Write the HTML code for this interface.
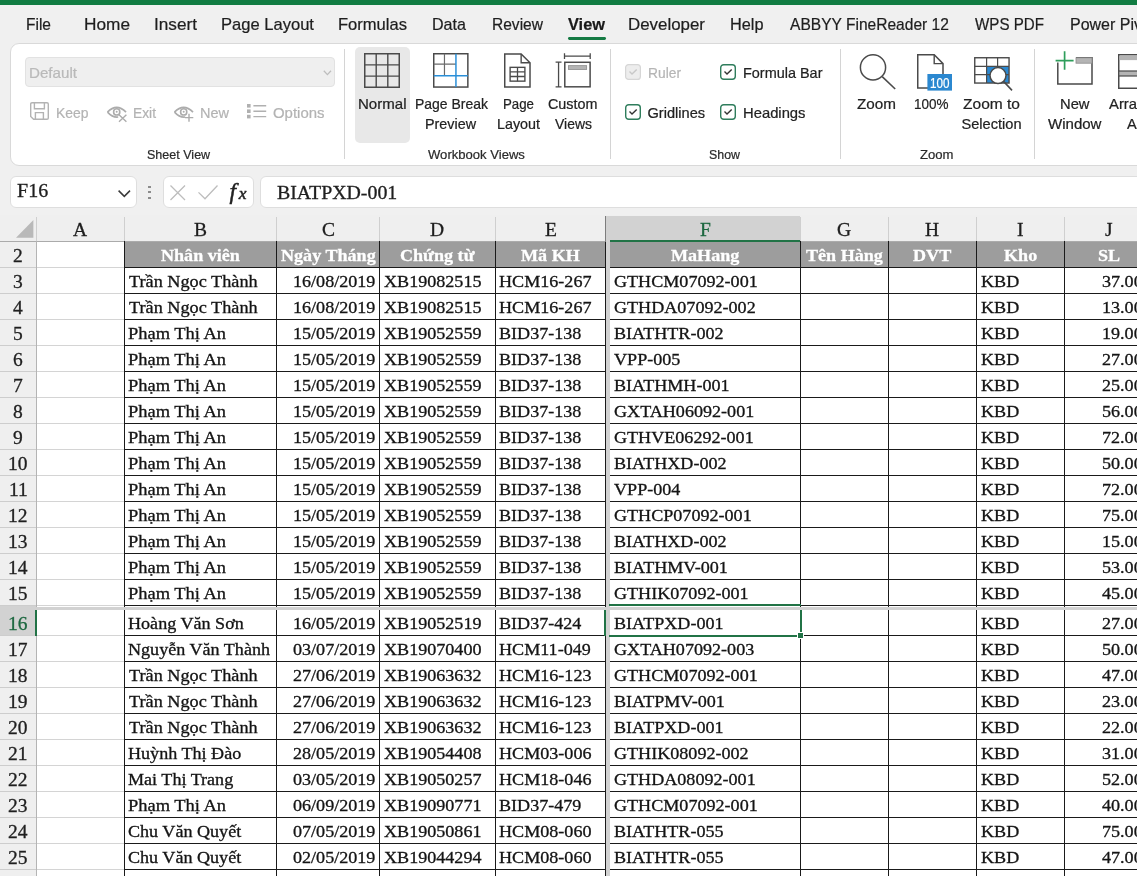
<!DOCTYPE html>
<html><head><meta charset="utf-8"><title>Excel</title>
<style>
html,body{margin:0;padding:0;}
body{width:1137px;height:876px;overflow:hidden;background:#f0f0f0;position:relative;font-family:"Liberation Sans",sans-serif;}
.t{position:absolute;white-space:nowrap;transform-origin:0 0;line-height:normal;-webkit-text-stroke:0.22px currentColor;}
.s{font-family:"Liberation Serif",serif;-webkit-text-stroke:0.3px currentColor;}
.r{position:absolute;}
svg{position:absolute;overflow:visible;}
#w{position:absolute;left:0;top:0;width:1137px;height:876px;will-change:transform;}
</style></head><body><div id="w">
<div class="r" style="left:0px;top:0px;width:1137px;height:4.5px;background:#117c42;"></div>
<span class="t" style="left:26.00px;top:15.00px;font-size:16.2px;color:#1e1e1e;transform:scaleX(0.9577);">File</span>
<span class="t" style="left:84.00px;top:15.00px;font-size:16.2px;color:#1e1e1e;transform:scaleX(1.0645);">Home</span>
<span class="t" style="left:154.00px;top:15.00px;font-size:16.2px;color:#1e1e1e;transform:scaleX(1.0613);">Insert</span>
<span class="t" style="left:221.00px;top:15.00px;font-size:16.2px;color:#1e1e1e;transform:scaleX(1.0223);">Page Layout</span>
<span class="t" style="left:338.00px;top:15.00px;font-size:16.2px;color:#1e1e1e;transform:scaleX(1.0220);">Formulas</span>
<span class="t" style="left:432.00px;top:15.00px;font-size:16.2px;color:#1e1e1e;transform:scaleX(0.9936);">Data</span>
<span class="t" style="left:492.00px;top:15.00px;font-size:16.2px;color:#1e1e1e;transform:scaleX(0.9601);">Review</span>
<span class="t" style="left:628.00px;top:15.00px;font-size:16.2px;color:#1e1e1e;transform:scaleX(1.0428);">Developer</span>
<span class="t" style="left:730.00px;top:15.00px;font-size:16.2px;color:#1e1e1e;transform:scaleX(1.0055);">Help</span>
<span class="t" style="left:789.50px;top:15.00px;font-size:16.2px;color:#1e1e1e;transform:scaleX(0.9613);">ABBYY FineReader 12</span>
<span class="t" style="left:974.50px;top:15.00px;font-size:16.2px;color:#1e1e1e;transform:scaleX(0.9349);">WPS PDF</span>
<span class="t" style="left:1069.50px;top:15.00px;font-size:16.2px;color:#1e1e1e;transform:scaleX(0.9873);">Power Pivot</span>
<span class="t" style="left:568.00px;top:15.00px;font-size:16.2px;color:#1a1a1a;font-weight:bold;transform:scaleX(1.0103);">View</span>
<div class="r" style="left:568px;top:37px;width:37.5px;height:2.8px;background:#157a43;border-radius:1.4px;"></div>
<div class="r" style="left:10px;top:43px;width:1200px;height:123px;background:#ffffff;border:1px solid #d9d9d9;border-radius:9px;box-sizing:border-box;"></div>
<div class="r" style="left:344px;top:49px;width:1px;height:110px;background:#d4d4d4;"></div>
<div class="r" style="left:610px;top:49px;width:1px;height:110px;background:#d4d4d4;"></div>
<div class="r" style="left:840px;top:49px;width:1px;height:110px;background:#d4d4d4;"></div>
<div class="r" style="left:1034px;top:49px;width:1px;height:110px;background:#d4d4d4;"></div>
<div class="r" style="left:25px;top:57px;width:310px;height:30px;background:#efefef;border:1px solid #e2e2e2;border-radius:4px;box-sizing:border-box;"></div>
<span class="t" style="left:29.00px;top:64.80px;font-size:14.6px;color:#b9b9b9;transform:scaleX(1.0376);">Default</span>
<svg style="left:323px;top:70px" width="9" height="6" viewBox="0 0 9 6"><path d="M0.8 0.8 L4.4 4.6 L8 0.8" fill="none" stroke="#bdbdbd" stroke-width="1.3"/></svg>
<span class="t" style="left:55.50px;top:104.60px;font-size:14.6px;color:#b3b3b3;transform:scaleX(0.9531);">Keep</span>
<span class="t" style="left:132.50px;top:104.60px;font-size:14.6px;color:#b3b3b3;transform:scaleX(0.9450);">Exit</span>
<span class="t" style="left:200.00px;top:104.60px;font-size:14.6px;color:#b3b3b3;transform:scaleX(0.9929);">New</span>
<span class="t" style="left:272.50px;top:104.60px;font-size:14.6px;color:#b3b3b3;transform:scaleX(1.0235);">Options</span>
<svg style="left:30px;top:102px" width="19" height="18" viewBox="0 0 19 18"><path d="M2 .7 H17 Q18.3 .7 18.3 2 V16 Q18.3 17.3 17 17.3 H3.6 L.7 14.4 V2 Q.7 .7 2 .7 Z" fill="none" stroke="#b3b3b3" stroke-width="1.4"/><path d="M4.4 .8 V6.8 H14.4 V.8" fill="none" stroke="#b3b3b3" stroke-width="1.4"/><path d="M5.4 17.2 V10.6 H13.4 V17.2" fill="none" stroke="#b3b3b3" stroke-width="1.4"/></svg>
<svg style="left:107px;top:104px" width="20" height="18" viewBox="0 0 20 18"><path d="M.5 8.1 Q9.6 -1.5 19 8.1" fill="none" stroke="#acacac" stroke-width="1.7"/><path d="M.5 8.1 Q5.6 13.7 11.2 13" fill="none" stroke="#acacac" stroke-width="1.6"/><circle cx="9.7" cy="7.9" r="3.1" fill="none" stroke="#acacac" stroke-width="1.6"/><circle cx="9.7" cy="7.7" r="1" fill="#acacac"/><path d="M12 10.8 L19.4 17.7 M19.4 10.8 L12 17.7" fill="none" stroke="#acacac" stroke-width="1.4"/></svg>
<svg style="left:174.3px;top:104px" width="20" height="18" viewBox="0 0 20 18"><path d="M.5 8.1 Q9.6 -1.5 19 8.1" fill="none" stroke="#acacac" stroke-width="1.7"/><path d="M.5 8.1 Q5.6 13.7 11.2 13" fill="none" stroke="#acacac" stroke-width="1.6"/><circle cx="9.7" cy="7.9" r="3.1" fill="none" stroke="#acacac" stroke-width="1.6"/><circle cx="9.7" cy="7.7" r="1" fill="#acacac"/><path d="M15 9.8 V17.7 M10.9 13.6 H19.3" fill="none" stroke="#acacac" stroke-width="1.4"/></svg>
<svg style="left:247px;top:104px" width="20" height="15" viewBox="0 0 20 15"><g fill="#b0b0b0"><rect x="0" y="0" width="3.6" height="3.6"/><rect x="0" y="5.4" width="3.6" height="3.6"/><rect x="0" y="10.8" width="3.6" height="3.6"/></g><path d="M6.4 1.8 H19.2 M6.4 7.2 H19.2 M6.4 12.6 H19.2" stroke="#b0b0b0" stroke-width="1.4"/></svg>
<span class="t" style="left:146.80px;top:147.00px;font-size:13.2px;color:#2a2a2a;transform:scaleX(0.9499);">Sheet View</span>
<div class="r" style="left:355px;top:47px;width:55px;height:96px;background:#e8e8e8;border-radius:5px;"></div>
<svg style="left:363.6px;top:53.3px" width="36" height="35" viewBox="0 0 36 35"><rect x=".75" y=".75" width="34.5" height="33.5" fill="none" stroke="#4a4a4a" stroke-width="1.5"/><path d="M12.2 .75 V34.25 M23.8 .75 V34.25 M.75 11.9 H35.25 M.75 23.1 H35.25" stroke="#4a4a4a" stroke-width="1.4" fill="none"/></svg>
<svg style="left:433px;top:53.3px" width="35.6" height="34.8" viewBox="0 0 36 35" preserveAspectRatio="none"><rect x=".75" y=".75" width="34.5" height="33.5" fill="#fff" stroke="#4a4a4a" stroke-width="1.5"/><path d="M11.6 .75 V22.8 M.75 11.2 H23.2" stroke="#6a6a6a" stroke-width="1.2" fill="none"/><path d="M23.2 .75 V34.25 M.75 22.8 H35.25" stroke="#2a8fd8" stroke-width="1.5" fill="none"/></svg>
<svg style="left:503.8px;top:53.3px" width="27.6" height="34.8" viewBox="0 0 28 35"><path d="M.75 .75 H17.4 L26.4 9.8 V34.25 H.75 Z" fill="#fff" stroke="#4a4a4a" stroke-width="1.5"/><path d="M17.4 .75 V9.8 H26.4" fill="none" stroke="#4a4a4a" stroke-width="1.4"/><rect x="6.2" y="14.4" width="15" height="14" fill="none" stroke="#4a4a4a" stroke-width="1.4"/><path d="M6.2 19.1 H21.2 M6.2 23.7 H21.2 M13.7 14.4 V28.4" stroke="#4a4a4a" stroke-width="1.3" fill="none"/></svg>
<svg style="left:555px;top:52.1px" width="36.6" height="36" viewBox="0 0 37 36"><path d="M9.6 1 V7 M35.6 1 V7 M9.6 4 H35.6" stroke="#4a4a4a" stroke-width="1.3" fill="none"/><path d="M.6 10 H6.6 M.6 35 H6.6 M3.6 10 V35" stroke="#4a4a4a" stroke-width="1.3" fill="none"/><rect x="9.9" y="10.2" width="25.6" height="24.8" fill="#fff" stroke="#4a4a4a" stroke-width="1.5"/><rect x="13.6" y="13.6" width="18.4" height="3.8" fill="#b4b4b4" stroke="#8a8a8a" stroke-width=".8"/></svg>
<span class="t" style="left:357.50px;top:95.50px;font-size:14.6px;color:#222222;transform:scaleX(1.0308);">Normal</span>
<span class="t" style="left:414.50px;top:95.50px;font-size:14.6px;color:#222222;transform:scaleX(0.9568);">Page Break</span>
<span class="t" style="left:425.30px;top:115.60px;font-size:14.6px;color:#222222;transform:scaleX(0.9821);">Preview</span>
<span class="t" style="left:502.50px;top:95.50px;font-size:14.6px;color:#222222;transform:scaleX(0.9091);">Page</span>
<span class="t" style="left:497.00px;top:115.60px;font-size:14.6px;color:#222222;transform:scaleX(0.9809);">Layout</span>
<span class="t" style="left:548.00px;top:95.50px;font-size:14.6px;color:#222222;transform:scaleX(0.9841);">Custom</span>
<span class="t" style="left:555.00px;top:115.60px;font-size:14.6px;color:#222222;transform:scaleX(0.9565);">Views</span>
<span class="t" style="left:428.00px;top:147.00px;font-size:13.2px;color:#2a2a2a;transform:scaleX(0.9916);">Workbook Views</span>
<svg style="left:625px;top:64px" width="16" height="16" viewBox="0 0 16 16"><rect x=".6" y=".6" width="14.8" height="14.8" rx="3" fill="#ededed" stroke="#d6d6d6" stroke-width="1.2"/><path d="M4.5 7.6 L7 10 L11.7 5.4" fill="none" stroke="#c8c8c8" stroke-width="1.4"/></svg>
<svg style="left:720px;top:64px" width="16" height="16" viewBox="0 0 16 16"><rect x=".7" y=".7" width="14.6" height="14.6" rx="3" fill="#fff" stroke="#2f7d5c" stroke-width="1.4"/><path d="M4.5 7.6 L7 10 L11.7 5.4" fill="none" stroke="#333" stroke-width="1.4"/></svg>
<svg style="left:625px;top:104px" width="16" height="16" viewBox="0 0 16 16"><rect x=".7" y=".7" width="14.6" height="14.6" rx="3" fill="#fff" stroke="#2f7d5c" stroke-width="1.4"/><path d="M4.5 7.6 L7 10 L11.7 5.4" fill="none" stroke="#333" stroke-width="1.4"/></svg>
<svg style="left:720px;top:104px" width="16" height="16" viewBox="0 0 16 16"><rect x=".7" y=".7" width="14.6" height="14.6" rx="3" fill="#fff" stroke="#2f7d5c" stroke-width="1.4"/><path d="M4.5 7.6 L7 10 L11.7 5.4" fill="none" stroke="#333" stroke-width="1.4"/></svg>
<span class="t" style="left:647.50px;top:64.80px;font-size:14.6px;color:#b5b5b5;transform:scaleX(0.9459);">Ruler</span>
<span class="t" style="left:742.50px;top:64.80px;font-size:14.6px;color:#222222;transform:scaleX(0.9898);">Formula Bar</span>
<span class="t" style="left:647.50px;top:104.60px;font-size:14.6px;color:#222222;">Gridlines</span>
<span class="t" style="left:742.50px;top:104.60px;font-size:14.6px;color:#222222;transform:scaleX(1.0132);">Headings</span>
<span class="t" style="left:709.00px;top:147.00px;font-size:13.2px;color:#2a2a2a;transform:scaleX(0.9388);">Show</span>
<svg style="left:858px;top:52px" width="40" height="40" viewBox="0 0 40 40"><circle cx="15" cy="15.4" r="12.6" fill="#fff" stroke="#4a4a4a" stroke-width="1.5"/><path d="M24.2 24.6 L37.2 37" stroke="#4a4a4a" stroke-width="1.6" fill="none"/></svg>
<svg style="left:916.5px;top:54px" width="36" height="37" viewBox="0 0 36 37"><path d="M.75 .75 H17.2 L26 9.6 V34 H.75 Z" fill="#fff" stroke="#4a4a4a" stroke-width="1.5"/><path d="M17.2 .75 V9.6 H26" fill="none" stroke="#4a4a4a" stroke-width="1.4"/><rect x="10.4" y="20" width="24.6" height="16.6" fill="#2b88d0"/></svg>
<span class="t" style="left:930.00px;top:75.40px;font-size:14px;color:#ffffff;transform:scaleX(0.8348);">100</span>
<svg style="left:974px;top:57px" width="40" height="35" viewBox="0 0 40 35"><rect x="12.6" y="9.4" width="22.4" height="16.6" fill="#2b88d0"/><rect x=".75" y=".75" width="34.3" height="25.3" fill="none" stroke="#4a4a4a" stroke-width="1.4"/><path d="M12.6 .75 V26 M23.6 .75 V26 M.75 9.4 H35 M.75 17.6 H35" stroke="#4a4a4a" stroke-width="1.2" fill="none"/><circle cx="24" cy="18.6" r="8" fill="#fff" stroke="#4a4a4a" stroke-width="1.5"/><path d="M29.8 24.6 L38 33.4" stroke="#4a4a4a" stroke-width="1.6" fill="none"/></svg>
<span class="t" style="left:857.00px;top:95.50px;font-size:14.6px;color:#222222;transform:scaleX(1.0450);">Zoom</span>
<span class="t" style="left:914.00px;top:95.50px;font-size:14.6px;color:#222222;transform:scaleX(0.9239);">100%</span>
<span class="t" style="left:963.00px;top:95.50px;font-size:14.6px;color:#222222;transform:scaleX(1.0644);">Zoom to</span>
<span class="t" style="left:961.50px;top:115.60px;font-size:14.6px;color:#222222;">Selection</span>
<span class="t" style="left:920.00px;top:147.00px;font-size:13.2px;color:#2a2a2a;transform:scaleX(0.9928);">Zoom</span>
<svg style="left:1054px;top:50px" width="40" height="36" viewBox="0 0 40 36"><path d="M3.8 12.4 V34 H38 V7.8 H22" fill="none" stroke="#4a4a4a" stroke-width="1.5"/><rect x="22" y="7.8" width="16" height="5.4" fill="#b4b4b4" stroke="#8a8a8a" stroke-width=".8"/><path d="M10.6 1.2 V19.8 M1.6 10.6 H19.6" stroke="#2e9e5b" stroke-width="1.7" fill="none"/></svg>
<span class="t" style="left:1060.00px;top:95.50px;font-size:14.6px;color:#222222;transform:scaleX(1.0100);">New</span>
<span class="t" style="left:1048.00px;top:115.60px;font-size:14.6px;color:#222222;transform:scaleX(1.0303);">Window</span>
<svg style="left:1118px;top:54px" width="30" height="35" viewBox="0 0 30 35"><rect x=".75" y=".75" width="34" height="33.5" fill="#fff" stroke="#4a4a4a" stroke-width="1.5"/><rect x="1.5" y="1.5" width="33" height="4.6" fill="#b4b4b4"/><rect x=".75" y="17" width="34" height="5" fill="#b4b4b4" stroke="#4a4a4a" stroke-width="1.2"/></svg>
<span class="t" style="left:1108.50px;top:95.50px;font-size:14.6px;color:#222222;transform:scaleX(1.0151);">Arra</span>
<span class="t" style="left:1127.00px;top:115.60px;font-size:14.6px;color:#222222;">A</span>
<div class="r" style="left:10px;top:176px;width:127px;height:31.5px;background:#ffffff;border:1px solid #dedede;border-radius:6px;box-sizing:border-box;"></div>
<span class="t s" style="left:16.60px;top:181.00px;font-size:17.8px;color:#1f1f1f;transform:scaleX(1.1264);">F16</span>
<svg style="left:118px;top:189.5px" width="13" height="8" viewBox="0 0 13 8"><path d="M.6 .6 L6.3 6.4 L12 .6" fill="none" stroke="#3a3a3a" stroke-width="1.5"/></svg>
<div class="r" style="left:148.4px;top:185.8px;width:2.2px;height:2.2px;background:#8c8c8c;"></div>
<div class="r" style="left:148.4px;top:191.2px;width:2.2px;height:2.2px;background:#8c8c8c;"></div>
<div class="r" style="left:148.4px;top:196.6px;width:2.2px;height:2.2px;background:#8c8c8c;"></div>
<div class="r" style="left:162.5px;top:176px;width:91px;height:31.5px;background:#ffffff;border:1px solid #dedede;border-radius:6px;box-sizing:border-box;"></div>
<svg style="left:170px;top:185px" width="16" height="16" viewBox="0 0 16 16"><path d="M.5 .5 L15 15 M15 .5 L.5 15" stroke="#bdbdbd" stroke-width="1.3" fill="none"/></svg>
<svg style="left:198px;top:184.5px" width="20" height="15" viewBox="0 0 20 15"><path d="M.5 7.4 L7 13.8 L19.5 .5" stroke="#bdbdbd" stroke-width="1.3" fill="none"/></svg>
<span class="t s" style="left:229.50px;top:178.00px;font-size:23.5px;color:#222;font-style:italic;-webkit-text-stroke:0.5px #222;">f</span>
<span class="t s" style="left:238.80px;top:183.20px;font-size:17.5px;color:#222;font-style:italic;-webkit-text-stroke:0.5px #222;">x</span>
<div class="r" style="left:259.5px;top:176px;width:900px;height:31.5px;background:#ffffff;border:1px solid #dedede;border-radius:6px;box-sizing:border-box;"></div>
<span class="t s" style="left:276.80px;top:183.00px;font-size:17.8px;color:#1f1f1f;transform:scaleX(1.1170);">BIATPXD-001</span>
<div class="r" style="left:36px;top:241px;width:1101px;height:635px;background:#ffffff;"></div>
<div class="r" style="left:0px;top:215px;width:1137px;height:26px;background:#efefef;"></div>
<div class="r" style="left:609px;top:216px;width:191px;height:25px;background:#d2d2d2;"></div>
<div class="r" style="left:36px;top:217px;width:1px;height:24px;background:#cfcfcf;"></div>
<div class="r" style="left:124px;top:217px;width:1px;height:24px;background:#cfcfcf;"></div>
<div class="r" style="left:276px;top:217px;width:1px;height:24px;background:#cfcfcf;"></div>
<div class="r" style="left:379px;top:217px;width:1px;height:24px;background:#cfcfcf;"></div>
<div class="r" style="left:495px;top:217px;width:1px;height:24px;background:#cfcfcf;"></div>
<div class="r" style="left:609px;top:217px;width:1px;height:24px;background:#cfcfcf;"></div>
<div class="r" style="left:800px;top:217px;width:1px;height:24px;background:#cfcfcf;"></div>
<div class="r" style="left:888px;top:217px;width:1px;height:24px;background:#cfcfcf;"></div>
<div class="r" style="left:976px;top:217px;width:1px;height:24px;background:#cfcfcf;"></div>
<div class="r" style="left:1064px;top:217px;width:1px;height:24px;background:#cfcfcf;"></div>
<div class="r" style="left:1153px;top:217px;width:1px;height:24px;background:#cfcfcf;"></div>
<div class="r" style="left:0px;top:241px;width:1137px;height:1px;background:#ababab;"></div>
<div class="r" style="left:609px;top:239.5px;width:191px;height:2px;background:#217346;"></div>
<svg style="left:16px;top:220px" width="18" height="18" viewBox="0 0 18 18"><path d="M17.4 0 V17.8 H0 Z" fill="#b9b9b9"/></svg>
<span class="t s" style="left:73.46px;top:219.70px;font-size:18.4px;color:#1f1f1f;transform:scaleX(1.0600);">A</span>
<span class="t s" style="left:194.00px;top:219.70px;font-size:18.4px;color:#1f1f1f;transform:scaleX(1.0600);">B</span>
<span class="t s" style="left:321.50px;top:219.70px;font-size:18.4px;color:#1f1f1f;transform:scaleX(1.0600);">C</span>
<span class="t s" style="left:430.46px;top:219.70px;font-size:18.4px;color:#1f1f1f;transform:scaleX(1.0600);">D</span>
<span class="t s" style="left:544.54px;top:219.70px;font-size:18.4px;color:#1f1f1f;transform:scaleX(1.0600);">E</span>
<span class="t s" style="left:699.58px;top:219.70px;font-size:18.4px;color:#1d6840;transform:scaleX(1.0600);">F</span>
<span class="t s" style="left:837.46px;top:219.70px;font-size:18.4px;color:#1f1f1f;transform:scaleX(1.0600);">G</span>
<span class="t s" style="left:925.46px;top:219.70px;font-size:18.4px;color:#1f1f1f;transform:scaleX(1.0600);">H</span>
<span class="t s" style="left:1017.25px;top:219.70px;font-size:18.4px;color:#1f1f1f;transform:scaleX(1.0600);">I</span>
<span class="t s" style="left:1105.20px;top:219.70px;font-size:18.4px;color:#1f1f1f;transform:scaleX(1.0600);">J</span>
<div class="r" style="left:0px;top:242px;width:36px;height:634px;background:#efefef;"></div>
<div class="r" style="left:0px;top:606px;width:36px;height:29.5px;background:#d2d2d2;"></div>
<div class="r" style="left:36px;top:241px;width:1px;height:635px;background:#b4b4b4;"></div>
<div class="r" style="left:0px;top:267px;width:36px;height:1px;background:#cdcdcd;"></div>
<div class="r" style="left:37px;top:267px;width:87px;height:1px;background:#d4d4d4;"></div>
<span class="t s" style="left:13.32px;top:245.60px;font-size:18.4px;color:#1f1f1f;transform:scaleX(1.0600);">2</span>
<div class="r" style="left:0px;top:293px;width:36px;height:1px;background:#cdcdcd;"></div>
<div class="r" style="left:37px;top:293px;width:87px;height:1px;background:#d4d4d4;"></div>
<span class="t s" style="left:13.32px;top:271.60px;font-size:18.4px;color:#1f1f1f;transform:scaleX(1.0600);">3</span>
<div class="r" style="left:0px;top:319px;width:36px;height:1px;background:#cdcdcd;"></div>
<div class="r" style="left:37px;top:319px;width:87px;height:1px;background:#d4d4d4;"></div>
<span class="t s" style="left:13.32px;top:297.60px;font-size:18.4px;color:#1f1f1f;transform:scaleX(1.0600);">4</span>
<div class="r" style="left:0px;top:345px;width:36px;height:1px;background:#cdcdcd;"></div>
<div class="r" style="left:37px;top:345px;width:87px;height:1px;background:#d4d4d4;"></div>
<span class="t s" style="left:13.32px;top:323.60px;font-size:18.4px;color:#1f1f1f;transform:scaleX(1.0600);">5</span>
<div class="r" style="left:0px;top:371px;width:36px;height:1px;background:#cdcdcd;"></div>
<div class="r" style="left:37px;top:371px;width:87px;height:1px;background:#d4d4d4;"></div>
<span class="t s" style="left:13.32px;top:349.60px;font-size:18.4px;color:#1f1f1f;transform:scaleX(1.0600);">6</span>
<div class="r" style="left:0px;top:397px;width:36px;height:1px;background:#cdcdcd;"></div>
<div class="r" style="left:37px;top:397px;width:87px;height:1px;background:#d4d4d4;"></div>
<span class="t s" style="left:13.32px;top:375.60px;font-size:18.4px;color:#1f1f1f;transform:scaleX(1.0600);">7</span>
<div class="r" style="left:0px;top:423px;width:36px;height:1px;background:#cdcdcd;"></div>
<div class="r" style="left:37px;top:423px;width:87px;height:1px;background:#d4d4d4;"></div>
<span class="t s" style="left:13.32px;top:401.60px;font-size:18.4px;color:#1f1f1f;transform:scaleX(1.0600);">8</span>
<div class="r" style="left:0px;top:449px;width:36px;height:1px;background:#cdcdcd;"></div>
<div class="r" style="left:37px;top:449px;width:87px;height:1px;background:#d4d4d4;"></div>
<span class="t s" style="left:13.32px;top:427.60px;font-size:18.4px;color:#1f1f1f;transform:scaleX(1.0600);">9</span>
<div class="r" style="left:0px;top:475px;width:36px;height:1px;background:#cdcdcd;"></div>
<div class="r" style="left:37px;top:475px;width:87px;height:1px;background:#d4d4d4;"></div>
<span class="t s" style="left:8.45px;top:453.60px;font-size:18.4px;color:#1f1f1f;transform:scaleX(1.0600);">10</span>
<div class="r" style="left:0px;top:501px;width:36px;height:1px;background:#cdcdcd;"></div>
<div class="r" style="left:37px;top:501px;width:87px;height:1px;background:#d4d4d4;"></div>
<span class="t s" style="left:8.81px;top:479.60px;font-size:18.4px;color:#1f1f1f;transform:scaleX(1.0600);">11</span>
<div class="r" style="left:0px;top:527px;width:36px;height:1px;background:#cdcdcd;"></div>
<div class="r" style="left:37px;top:527px;width:87px;height:1px;background:#d4d4d4;"></div>
<span class="t s" style="left:8.45px;top:505.60px;font-size:18.4px;color:#1f1f1f;transform:scaleX(1.0600);">12</span>
<div class="r" style="left:0px;top:553px;width:36px;height:1px;background:#cdcdcd;"></div>
<div class="r" style="left:37px;top:553px;width:87px;height:1px;background:#d4d4d4;"></div>
<span class="t s" style="left:8.45px;top:531.60px;font-size:18.4px;color:#1f1f1f;transform:scaleX(1.0600);">13</span>
<div class="r" style="left:0px;top:579px;width:36px;height:1px;background:#cdcdcd;"></div>
<div class="r" style="left:37px;top:579px;width:87px;height:1px;background:#d4d4d4;"></div>
<span class="t s" style="left:8.45px;top:557.60px;font-size:18.4px;color:#1f1f1f;transform:scaleX(1.0600);">14</span>
<div class="r" style="left:0px;top:605px;width:36px;height:1px;background:#cdcdcd;"></div>
<div class="r" style="left:37px;top:605px;width:87px;height:1px;background:#d4d4d4;"></div>
<span class="t s" style="left:8.45px;top:583.60px;font-size:18.4px;color:#1f1f1f;transform:scaleX(1.0600);">15</span>
<div class="r" style="left:0px;top:635px;width:36px;height:1px;background:#cdcdcd;"></div>
<div class="r" style="left:37px;top:635px;width:87px;height:1px;background:#d4d4d4;"></div>
<span class="t s" style="left:8.45px;top:613.60px;font-size:18.4px;color:#1d6840;transform:scaleX(1.0600);">16</span>
<div class="r" style="left:0px;top:661px;width:36px;height:1px;background:#cdcdcd;"></div>
<div class="r" style="left:37px;top:661px;width:87px;height:1px;background:#d4d4d4;"></div>
<span class="t s" style="left:8.45px;top:639.60px;font-size:18.4px;color:#1f1f1f;transform:scaleX(1.0600);">17</span>
<div class="r" style="left:0px;top:687px;width:36px;height:1px;background:#cdcdcd;"></div>
<div class="r" style="left:37px;top:687px;width:87px;height:1px;background:#d4d4d4;"></div>
<span class="t s" style="left:8.45px;top:665.60px;font-size:18.4px;color:#1f1f1f;transform:scaleX(1.0600);">18</span>
<div class="r" style="left:0px;top:713px;width:36px;height:1px;background:#cdcdcd;"></div>
<div class="r" style="left:37px;top:713px;width:87px;height:1px;background:#d4d4d4;"></div>
<span class="t s" style="left:8.45px;top:691.60px;font-size:18.4px;color:#1f1f1f;transform:scaleX(1.0600);">19</span>
<div class="r" style="left:0px;top:739px;width:36px;height:1px;background:#cdcdcd;"></div>
<div class="r" style="left:37px;top:739px;width:87px;height:1px;background:#d4d4d4;"></div>
<span class="t s" style="left:8.45px;top:717.60px;font-size:18.4px;color:#1f1f1f;transform:scaleX(1.0600);">20</span>
<div class="r" style="left:0px;top:765px;width:36px;height:1px;background:#cdcdcd;"></div>
<div class="r" style="left:37px;top:765px;width:87px;height:1px;background:#d4d4d4;"></div>
<span class="t s" style="left:8.45px;top:743.60px;font-size:18.4px;color:#1f1f1f;transform:scaleX(1.0600);">21</span>
<div class="r" style="left:0px;top:791px;width:36px;height:1px;background:#cdcdcd;"></div>
<div class="r" style="left:37px;top:791px;width:87px;height:1px;background:#d4d4d4;"></div>
<span class="t s" style="left:8.45px;top:769.60px;font-size:18.4px;color:#1f1f1f;transform:scaleX(1.0600);">22</span>
<div class="r" style="left:0px;top:817px;width:36px;height:1px;background:#cdcdcd;"></div>
<div class="r" style="left:37px;top:817px;width:87px;height:1px;background:#d4d4d4;"></div>
<span class="t s" style="left:8.45px;top:795.60px;font-size:18.4px;color:#1f1f1f;transform:scaleX(1.0600);">23</span>
<div class="r" style="left:0px;top:843px;width:36px;height:1px;background:#cdcdcd;"></div>
<div class="r" style="left:37px;top:843px;width:87px;height:1px;background:#d4d4d4;"></div>
<span class="t s" style="left:8.45px;top:821.60px;font-size:18.4px;color:#1f1f1f;transform:scaleX(1.0600);">24</span>
<div class="r" style="left:0px;top:869px;width:36px;height:1px;background:#cdcdcd;"></div>
<div class="r" style="left:37px;top:869px;width:87px;height:1px;background:#d4d4d4;"></div>
<span class="t s" style="left:8.45px;top:847.60px;font-size:18.4px;color:#1f1f1f;transform:scaleX(1.0600);">25</span>
<div class="r" style="left:0px;top:895px;width:36px;height:1px;background:#cdcdcd;"></div>
<div class="r" style="left:37px;top:895px;width:87px;height:1px;background:#d4d4d4;"></div>
<div class="r" style="left:35px;top:610px;width:2px;height:26px;background:#217346;"></div>
<div class="r" style="left:124px;top:242px;width:152px;height:25px;background:#9d9d9d;"></div>
<div class="r" style="left:276px;top:242px;width:103px;height:25px;background:#9d9d9d;"></div>
<div class="r" style="left:379px;top:242px;width:116px;height:25px;background:#9d9d9d;"></div>
<div class="r" style="left:495px;top:242px;width:110px;height:25px;background:#9d9d9d;"></div>
<div class="r" style="left:609px;top:242px;width:191px;height:25px;background:#9d9d9d;"></div>
<div class="r" style="left:800px;top:242px;width:88px;height:25px;background:#9d9d9d;"></div>
<div class="r" style="left:888px;top:242px;width:88px;height:25px;background:#9d9d9d;"></div>
<div class="r" style="left:976px;top:242px;width:88px;height:25px;background:#9d9d9d;"></div>
<div class="r" style="left:1064px;top:242px;width:89px;height:25px;background:#9d9d9d;"></div>
<span class="t s" style="left:161.02px;top:245.00px;font-size:17.4px;color:#ffffff;font-weight:bold;transform:scaleX(1.0402);">Nhân viên</span>
<span class="t s" style="left:280.64px;top:245.00px;font-size:17.4px;color:#ffffff;font-weight:bold;transform:scaleX(1.0402);">Ngày Tháng</span>
<span class="t s" style="left:400.23px;top:245.00px;font-size:17.4px;color:#ffffff;font-weight:bold;transform:scaleX(1.0402);">Chứng từ</span>
<span class="t s" style="left:521.09px;top:245.00px;font-size:17.4px;color:#ffffff;font-weight:bold;transform:scaleX(1.0402);">Mã KH</span>
<span class="t s" style="left:670.81px;top:245.00px;font-size:17.4px;color:#ffffff;font-weight:bold;transform:scaleX(1.0402);">MaHang</span>
<span class="t s" style="left:806.03px;top:245.00px;font-size:17.4px;color:#ffffff;font-weight:bold;transform:scaleX(1.0402);">Tên Hàng</span>
<span class="t s" style="left:913.39px;top:245.00px;font-size:17.4px;color:#ffffff;font-weight:bold;transform:scaleX(1.0402);">DVT</span>
<span class="t s" style="left:1003.90px;top:245.00px;font-size:17.4px;color:#ffffff;font-weight:bold;transform:scaleX(1.0402);">Kho</span>
<span class="t s" style="left:1097.93px;top:245.00px;font-size:17.4px;color:#ffffff;font-weight:bold;transform:scaleX(1.0402);">SL</span>
<span class="t s" style="left:129.20px;top:272.40px;font-size:16.4px;color:#141414;transform:scaleX(1.1125);">Trần Ngọc Thành</span>
<span class="t s" style="left:293.04px;top:272.40px;font-size:16.4px;color:#141414;transform:scaleX(1.1037);">16/08/2019</span>
<span class="t s" style="left:383.50px;top:272.40px;font-size:16.4px;color:#141414;transform:scaleX(1.1037);">XB19082515</span>
<span class="t s" style="left:499.00px;top:272.40px;font-size:16.4px;color:#141414;transform:scaleX(1.1037);">HCM16-267</span>
<span class="t s" style="left:613.50px;top:272.40px;font-size:16.4px;color:#141414;transform:scaleX(1.1037);">GTHCM07092-001</span>
<span class="t s" style="left:980.50px;top:272.40px;font-size:16.4px;color:#141414;transform:scaleX(1.1037);">KBD</span>
<span class="t s" style="left:1102.30px;top:272.40px;font-size:16.4px;color:#141414;transform:scaleX(1.1037);">37.00</span>
<span class="t s" style="left:129.20px;top:298.40px;font-size:16.4px;color:#141414;transform:scaleX(1.1125);">Trần Ngọc Thành</span>
<span class="t s" style="left:293.04px;top:298.40px;font-size:16.4px;color:#141414;transform:scaleX(1.1037);">16/08/2019</span>
<span class="t s" style="left:383.50px;top:298.40px;font-size:16.4px;color:#141414;transform:scaleX(1.1037);">XB19082515</span>
<span class="t s" style="left:499.00px;top:298.40px;font-size:16.4px;color:#141414;transform:scaleX(1.1037);">HCM16-267</span>
<span class="t s" style="left:613.50px;top:298.40px;font-size:16.4px;color:#141414;transform:scaleX(1.1037);">GTHDA07092-002</span>
<span class="t s" style="left:980.50px;top:298.40px;font-size:16.4px;color:#141414;transform:scaleX(1.1037);">KBD</span>
<span class="t s" style="left:1102.30px;top:298.40px;font-size:16.4px;color:#141414;transform:scaleX(1.1037);">13.00</span>
<span class="t s" style="left:128.00px;top:324.40px;font-size:16.4px;color:#141414;transform:scaleX(1.1257);">Phạm Thị An</span>
<span class="t s" style="left:293.04px;top:324.40px;font-size:16.4px;color:#141414;transform:scaleX(1.1037);">15/05/2019</span>
<span class="t s" style="left:383.50px;top:324.40px;font-size:16.4px;color:#141414;transform:scaleX(1.1037);">XB19052559</span>
<span class="t s" style="left:499.00px;top:324.40px;font-size:16.4px;color:#141414;transform:scaleX(1.1037);">BID37-138</span>
<span class="t s" style="left:613.50px;top:324.40px;font-size:16.4px;color:#141414;transform:scaleX(1.1037);">BIATHTR-002</span>
<span class="t s" style="left:980.50px;top:324.40px;font-size:16.4px;color:#141414;transform:scaleX(1.1037);">KBD</span>
<span class="t s" style="left:1102.30px;top:324.40px;font-size:16.4px;color:#141414;transform:scaleX(1.1037);">19.00</span>
<span class="t s" style="left:128.00px;top:350.40px;font-size:16.4px;color:#141414;transform:scaleX(1.1257);">Phạm Thị An</span>
<span class="t s" style="left:293.04px;top:350.40px;font-size:16.4px;color:#141414;transform:scaleX(1.1037);">15/05/2019</span>
<span class="t s" style="left:383.50px;top:350.40px;font-size:16.4px;color:#141414;transform:scaleX(1.1037);">XB19052559</span>
<span class="t s" style="left:499.00px;top:350.40px;font-size:16.4px;color:#141414;transform:scaleX(1.1037);">BID37-138</span>
<span class="t s" style="left:613.50px;top:350.40px;font-size:16.4px;color:#141414;transform:scaleX(1.1037);">VPP-005</span>
<span class="t s" style="left:980.50px;top:350.40px;font-size:16.4px;color:#141414;transform:scaleX(1.1037);">KBD</span>
<span class="t s" style="left:1102.30px;top:350.40px;font-size:16.4px;color:#141414;transform:scaleX(1.1037);">27.00</span>
<span class="t s" style="left:128.00px;top:376.40px;font-size:16.4px;color:#141414;transform:scaleX(1.1257);">Phạm Thị An</span>
<span class="t s" style="left:293.04px;top:376.40px;font-size:16.4px;color:#141414;transform:scaleX(1.1037);">15/05/2019</span>
<span class="t s" style="left:383.50px;top:376.40px;font-size:16.4px;color:#141414;transform:scaleX(1.1037);">XB19052559</span>
<span class="t s" style="left:499.00px;top:376.40px;font-size:16.4px;color:#141414;transform:scaleX(1.1037);">BID37-138</span>
<span class="t s" style="left:613.50px;top:376.40px;font-size:16.4px;color:#141414;transform:scaleX(1.1037);">BIATHMH-001</span>
<span class="t s" style="left:980.50px;top:376.40px;font-size:16.4px;color:#141414;transform:scaleX(1.1037);">KBD</span>
<span class="t s" style="left:1102.30px;top:376.40px;font-size:16.4px;color:#141414;transform:scaleX(1.1037);">25.00</span>
<span class="t s" style="left:128.00px;top:402.40px;font-size:16.4px;color:#141414;transform:scaleX(1.1257);">Phạm Thị An</span>
<span class="t s" style="left:293.04px;top:402.40px;font-size:16.4px;color:#141414;transform:scaleX(1.1037);">15/05/2019</span>
<span class="t s" style="left:383.50px;top:402.40px;font-size:16.4px;color:#141414;transform:scaleX(1.1037);">XB19052559</span>
<span class="t s" style="left:499.00px;top:402.40px;font-size:16.4px;color:#141414;transform:scaleX(1.1037);">BID37-138</span>
<span class="t s" style="left:613.50px;top:402.40px;font-size:16.4px;color:#141414;transform:scaleX(1.1037);">GXTAH06092-001</span>
<span class="t s" style="left:980.50px;top:402.40px;font-size:16.4px;color:#141414;transform:scaleX(1.1037);">KBD</span>
<span class="t s" style="left:1102.30px;top:402.40px;font-size:16.4px;color:#141414;transform:scaleX(1.1037);">56.00</span>
<span class="t s" style="left:128.00px;top:428.40px;font-size:16.4px;color:#141414;transform:scaleX(1.1257);">Phạm Thị An</span>
<span class="t s" style="left:293.04px;top:428.40px;font-size:16.4px;color:#141414;transform:scaleX(1.1037);">15/05/2019</span>
<span class="t s" style="left:383.50px;top:428.40px;font-size:16.4px;color:#141414;transform:scaleX(1.1037);">XB19052559</span>
<span class="t s" style="left:499.00px;top:428.40px;font-size:16.4px;color:#141414;transform:scaleX(1.1037);">BID37-138</span>
<span class="t s" style="left:613.50px;top:428.40px;font-size:16.4px;color:#141414;transform:scaleX(1.1037);">GTHVE06292-001</span>
<span class="t s" style="left:980.50px;top:428.40px;font-size:16.4px;color:#141414;transform:scaleX(1.1037);">KBD</span>
<span class="t s" style="left:1102.30px;top:428.40px;font-size:16.4px;color:#141414;transform:scaleX(1.1037);">72.00</span>
<span class="t s" style="left:128.00px;top:454.40px;font-size:16.4px;color:#141414;transform:scaleX(1.1257);">Phạm Thị An</span>
<span class="t s" style="left:293.04px;top:454.40px;font-size:16.4px;color:#141414;transform:scaleX(1.1037);">15/05/2019</span>
<span class="t s" style="left:383.50px;top:454.40px;font-size:16.4px;color:#141414;transform:scaleX(1.1037);">XB19052559</span>
<span class="t s" style="left:499.00px;top:454.40px;font-size:16.4px;color:#141414;transform:scaleX(1.1037);">BID37-138</span>
<span class="t s" style="left:613.50px;top:454.40px;font-size:16.4px;color:#141414;transform:scaleX(1.1037);">BIATHXD-002</span>
<span class="t s" style="left:980.50px;top:454.40px;font-size:16.4px;color:#141414;transform:scaleX(1.1037);">KBD</span>
<span class="t s" style="left:1102.30px;top:454.40px;font-size:16.4px;color:#141414;transform:scaleX(1.1037);">50.00</span>
<span class="t s" style="left:128.00px;top:480.40px;font-size:16.4px;color:#141414;transform:scaleX(1.1257);">Phạm Thị An</span>
<span class="t s" style="left:293.04px;top:480.40px;font-size:16.4px;color:#141414;transform:scaleX(1.1037);">15/05/2019</span>
<span class="t s" style="left:383.50px;top:480.40px;font-size:16.4px;color:#141414;transform:scaleX(1.1037);">XB19052559</span>
<span class="t s" style="left:499.00px;top:480.40px;font-size:16.4px;color:#141414;transform:scaleX(1.1037);">BID37-138</span>
<span class="t s" style="left:613.50px;top:480.40px;font-size:16.4px;color:#141414;transform:scaleX(1.1037);">VPP-004</span>
<span class="t s" style="left:980.50px;top:480.40px;font-size:16.4px;color:#141414;transform:scaleX(1.1037);">KBD</span>
<span class="t s" style="left:1102.30px;top:480.40px;font-size:16.4px;color:#141414;transform:scaleX(1.1037);">72.00</span>
<span class="t s" style="left:128.00px;top:506.40px;font-size:16.4px;color:#141414;transform:scaleX(1.1257);">Phạm Thị An</span>
<span class="t s" style="left:293.04px;top:506.40px;font-size:16.4px;color:#141414;transform:scaleX(1.1037);">15/05/2019</span>
<span class="t s" style="left:383.50px;top:506.40px;font-size:16.4px;color:#141414;transform:scaleX(1.1037);">XB19052559</span>
<span class="t s" style="left:499.00px;top:506.40px;font-size:16.4px;color:#141414;transform:scaleX(1.1037);">BID37-138</span>
<span class="t s" style="left:613.50px;top:506.40px;font-size:16.4px;color:#141414;transform:scaleX(1.1037);">GTHCP07092-001</span>
<span class="t s" style="left:980.50px;top:506.40px;font-size:16.4px;color:#141414;transform:scaleX(1.1037);">KBD</span>
<span class="t s" style="left:1102.30px;top:506.40px;font-size:16.4px;color:#141414;transform:scaleX(1.1037);">75.00</span>
<span class="t s" style="left:128.00px;top:532.40px;font-size:16.4px;color:#141414;transform:scaleX(1.1257);">Phạm Thị An</span>
<span class="t s" style="left:293.04px;top:532.40px;font-size:16.4px;color:#141414;transform:scaleX(1.1037);">15/05/2019</span>
<span class="t s" style="left:383.50px;top:532.40px;font-size:16.4px;color:#141414;transform:scaleX(1.1037);">XB19052559</span>
<span class="t s" style="left:499.00px;top:532.40px;font-size:16.4px;color:#141414;transform:scaleX(1.1037);">BID37-138</span>
<span class="t s" style="left:613.50px;top:532.40px;font-size:16.4px;color:#141414;transform:scaleX(1.1037);">BIATHXD-002</span>
<span class="t s" style="left:980.50px;top:532.40px;font-size:16.4px;color:#141414;transform:scaleX(1.1037);">KBD</span>
<span class="t s" style="left:1102.30px;top:532.40px;font-size:16.4px;color:#141414;transform:scaleX(1.1037);">15.00</span>
<span class="t s" style="left:128.00px;top:558.40px;font-size:16.4px;color:#141414;transform:scaleX(1.1257);">Phạm Thị An</span>
<span class="t s" style="left:293.04px;top:558.40px;font-size:16.4px;color:#141414;transform:scaleX(1.1037);">15/05/2019</span>
<span class="t s" style="left:383.50px;top:558.40px;font-size:16.4px;color:#141414;transform:scaleX(1.1037);">XB19052559</span>
<span class="t s" style="left:499.00px;top:558.40px;font-size:16.4px;color:#141414;transform:scaleX(1.1037);">BID37-138</span>
<span class="t s" style="left:613.50px;top:558.40px;font-size:16.4px;color:#141414;transform:scaleX(1.1037);">BIATHMV-001</span>
<span class="t s" style="left:980.50px;top:558.40px;font-size:16.4px;color:#141414;transform:scaleX(1.1037);">KBD</span>
<span class="t s" style="left:1102.30px;top:558.40px;font-size:16.4px;color:#141414;transform:scaleX(1.1037);">53.00</span>
<span class="t s" style="left:128.00px;top:584.40px;font-size:16.4px;color:#141414;transform:scaleX(1.1257);">Phạm Thị An</span>
<span class="t s" style="left:293.04px;top:584.40px;font-size:16.4px;color:#141414;transform:scaleX(1.1037);">15/05/2019</span>
<span class="t s" style="left:383.50px;top:584.40px;font-size:16.4px;color:#141414;transform:scaleX(1.1037);">XB19052559</span>
<span class="t s" style="left:499.00px;top:584.40px;font-size:16.4px;color:#141414;transform:scaleX(1.1037);">BID37-138</span>
<span class="t s" style="left:613.50px;top:584.40px;font-size:16.4px;color:#141414;transform:scaleX(1.1037);">GTHIK07092-001</span>
<span class="t s" style="left:980.50px;top:584.40px;font-size:16.4px;color:#141414;transform:scaleX(1.1037);">KBD</span>
<span class="t s" style="left:1102.30px;top:584.40px;font-size:16.4px;color:#141414;transform:scaleX(1.1037);">45.00</span>
<span class="t s" style="left:128.00px;top:614.40px;font-size:16.4px;color:#141414;transform:scaleX(1.1037);">Hoàng Văn Sơn</span>
<span class="t s" style="left:293.04px;top:614.40px;font-size:16.4px;color:#141414;transform:scaleX(1.1037);">16/05/2019</span>
<span class="t s" style="left:383.50px;top:614.40px;font-size:16.4px;color:#141414;transform:scaleX(1.1037);">XB19052519</span>
<span class="t s" style="left:499.00px;top:614.40px;font-size:16.4px;color:#141414;transform:scaleX(1.1037);">BID37-424</span>
<span class="t s" style="left:613.50px;top:614.40px;font-size:16.4px;color:#141414;transform:scaleX(1.1037);">BIATPXD-001</span>
<span class="t s" style="left:980.50px;top:614.40px;font-size:16.4px;color:#141414;transform:scaleX(1.1037);">KBD</span>
<span class="t s" style="left:1102.30px;top:614.40px;font-size:16.4px;color:#141414;transform:scaleX(1.1037);">27.00</span>
<span class="t s" style="left:128.00px;top:640.40px;font-size:16.4px;color:#141414;transform:scaleX(1.1037);">Nguyễn Văn Thành</span>
<span class="t s" style="left:293.04px;top:640.40px;font-size:16.4px;color:#141414;transform:scaleX(1.1037);">03/07/2019</span>
<span class="t s" style="left:383.50px;top:640.40px;font-size:16.4px;color:#141414;transform:scaleX(1.1037);">XB19070400</span>
<span class="t s" style="left:499.00px;top:640.40px;font-size:16.4px;color:#141414;transform:scaleX(1.1037);">HCM11-049</span>
<span class="t s" style="left:613.50px;top:640.40px;font-size:16.4px;color:#141414;transform:scaleX(1.1037);">GXTAH07092-003</span>
<span class="t s" style="left:980.50px;top:640.40px;font-size:16.4px;color:#141414;transform:scaleX(1.1037);">KBD</span>
<span class="t s" style="left:1102.30px;top:640.40px;font-size:16.4px;color:#141414;transform:scaleX(1.1037);">50.00</span>
<span class="t s" style="left:129.20px;top:666.40px;font-size:16.4px;color:#141414;transform:scaleX(1.1125);">Trần Ngọc Thành</span>
<span class="t s" style="left:293.04px;top:666.40px;font-size:16.4px;color:#141414;transform:scaleX(1.1037);">27/06/2019</span>
<span class="t s" style="left:383.50px;top:666.40px;font-size:16.4px;color:#141414;transform:scaleX(1.1037);">XB19063632</span>
<span class="t s" style="left:499.00px;top:666.40px;font-size:16.4px;color:#141414;transform:scaleX(1.1037);">HCM16-123</span>
<span class="t s" style="left:613.50px;top:666.40px;font-size:16.4px;color:#141414;transform:scaleX(1.1037);">GTHCM07092-001</span>
<span class="t s" style="left:980.50px;top:666.40px;font-size:16.4px;color:#141414;transform:scaleX(1.1037);">KBD</span>
<span class="t s" style="left:1102.30px;top:666.40px;font-size:16.4px;color:#141414;transform:scaleX(1.1037);">47.00</span>
<span class="t s" style="left:129.20px;top:692.40px;font-size:16.4px;color:#141414;transform:scaleX(1.1125);">Trần Ngọc Thành</span>
<span class="t s" style="left:293.04px;top:692.40px;font-size:16.4px;color:#141414;transform:scaleX(1.1037);">27/06/2019</span>
<span class="t s" style="left:383.50px;top:692.40px;font-size:16.4px;color:#141414;transform:scaleX(1.1037);">XB19063632</span>
<span class="t s" style="left:499.00px;top:692.40px;font-size:16.4px;color:#141414;transform:scaleX(1.1037);">HCM16-123</span>
<span class="t s" style="left:613.50px;top:692.40px;font-size:16.4px;color:#141414;transform:scaleX(1.1037);">BIATPMV-001</span>
<span class="t s" style="left:980.50px;top:692.40px;font-size:16.4px;color:#141414;transform:scaleX(1.1037);">KBD</span>
<span class="t s" style="left:1102.30px;top:692.40px;font-size:16.4px;color:#141414;transform:scaleX(1.1037);">23.00</span>
<span class="t s" style="left:129.20px;top:718.40px;font-size:16.4px;color:#141414;transform:scaleX(1.1125);">Trần Ngọc Thành</span>
<span class="t s" style="left:293.04px;top:718.40px;font-size:16.4px;color:#141414;transform:scaleX(1.1037);">27/06/2019</span>
<span class="t s" style="left:383.50px;top:718.40px;font-size:16.4px;color:#141414;transform:scaleX(1.1037);">XB19063632</span>
<span class="t s" style="left:499.00px;top:718.40px;font-size:16.4px;color:#141414;transform:scaleX(1.1037);">HCM16-123</span>
<span class="t s" style="left:613.50px;top:718.40px;font-size:16.4px;color:#141414;transform:scaleX(1.1037);">BIATPXD-001</span>
<span class="t s" style="left:980.50px;top:718.40px;font-size:16.4px;color:#141414;transform:scaleX(1.1037);">KBD</span>
<span class="t s" style="left:1102.30px;top:718.40px;font-size:16.4px;color:#141414;transform:scaleX(1.1037);">22.00</span>
<span class="t s" style="left:128.00px;top:744.40px;font-size:16.4px;color:#141414;transform:scaleX(1.1037);">Huỳnh Thị Đào</span>
<span class="t s" style="left:293.04px;top:744.40px;font-size:16.4px;color:#141414;transform:scaleX(1.1037);">28/05/2019</span>
<span class="t s" style="left:383.50px;top:744.40px;font-size:16.4px;color:#141414;transform:scaleX(1.1037);">XB19054408</span>
<span class="t s" style="left:499.00px;top:744.40px;font-size:16.4px;color:#141414;transform:scaleX(1.1037);">HCM03-006</span>
<span class="t s" style="left:613.50px;top:744.40px;font-size:16.4px;color:#141414;transform:scaleX(1.1037);">GTHIK08092-002</span>
<span class="t s" style="left:980.50px;top:744.40px;font-size:16.4px;color:#141414;transform:scaleX(1.1037);">KBD</span>
<span class="t s" style="left:1102.30px;top:744.40px;font-size:16.4px;color:#141414;transform:scaleX(1.1037);">31.00</span>
<span class="t s" style="left:128.00px;top:770.40px;font-size:16.4px;color:#141414;transform:scaleX(1.1037);">Mai Thị Trang</span>
<span class="t s" style="left:293.04px;top:770.40px;font-size:16.4px;color:#141414;transform:scaleX(1.1037);">03/05/2019</span>
<span class="t s" style="left:383.50px;top:770.40px;font-size:16.4px;color:#141414;transform:scaleX(1.1037);">XB19050257</span>
<span class="t s" style="left:499.00px;top:770.40px;font-size:16.4px;color:#141414;transform:scaleX(1.1037);">HCM18-046</span>
<span class="t s" style="left:613.50px;top:770.40px;font-size:16.4px;color:#141414;transform:scaleX(1.1037);">GTHDA08092-001</span>
<span class="t s" style="left:980.50px;top:770.40px;font-size:16.4px;color:#141414;transform:scaleX(1.1037);">KBD</span>
<span class="t s" style="left:1102.30px;top:770.40px;font-size:16.4px;color:#141414;transform:scaleX(1.1037);">52.00</span>
<span class="t s" style="left:128.00px;top:796.40px;font-size:16.4px;color:#141414;transform:scaleX(1.1257);">Phạm Thị An</span>
<span class="t s" style="left:293.04px;top:796.40px;font-size:16.4px;color:#141414;transform:scaleX(1.1037);">06/09/2019</span>
<span class="t s" style="left:383.50px;top:796.40px;font-size:16.4px;color:#141414;transform:scaleX(1.1037);">XB19090771</span>
<span class="t s" style="left:499.00px;top:796.40px;font-size:16.4px;color:#141414;transform:scaleX(1.1037);">BID37-479</span>
<span class="t s" style="left:613.50px;top:796.40px;font-size:16.4px;color:#141414;transform:scaleX(1.1037);">GTHCM07092-001</span>
<span class="t s" style="left:980.50px;top:796.40px;font-size:16.4px;color:#141414;transform:scaleX(1.1037);">KBD</span>
<span class="t s" style="left:1102.30px;top:796.40px;font-size:16.4px;color:#141414;transform:scaleX(1.1037);">40.00</span>
<span class="t s" style="left:128.00px;top:822.40px;font-size:16.4px;color:#141414;transform:scaleX(1.1037);">Chu Văn Quyết</span>
<span class="t s" style="left:293.04px;top:822.40px;font-size:16.4px;color:#141414;transform:scaleX(1.1037);">07/05/2019</span>
<span class="t s" style="left:383.50px;top:822.40px;font-size:16.4px;color:#141414;transform:scaleX(1.1037);">XB19050861</span>
<span class="t s" style="left:499.00px;top:822.40px;font-size:16.4px;color:#141414;transform:scaleX(1.1037);">HCM08-060</span>
<span class="t s" style="left:613.50px;top:822.40px;font-size:16.4px;color:#141414;transform:scaleX(1.1037);">BIATHTR-055</span>
<span class="t s" style="left:980.50px;top:822.40px;font-size:16.4px;color:#141414;transform:scaleX(1.1037);">KBD</span>
<span class="t s" style="left:1102.30px;top:822.40px;font-size:16.4px;color:#141414;transform:scaleX(1.1037);">75.00</span>
<span class="t s" style="left:128.00px;top:848.40px;font-size:16.4px;color:#141414;transform:scaleX(1.1037);">Chu Văn Quyết</span>
<span class="t s" style="left:293.04px;top:848.40px;font-size:16.4px;color:#141414;transform:scaleX(1.1037);">02/05/2019</span>
<span class="t s" style="left:383.50px;top:848.40px;font-size:16.4px;color:#141414;transform:scaleX(1.1037);">XB19044294</span>
<span class="t s" style="left:499.00px;top:848.40px;font-size:16.4px;color:#141414;transform:scaleX(1.1037);">HCM08-060</span>
<span class="t s" style="left:613.50px;top:848.40px;font-size:16.4px;color:#141414;transform:scaleX(1.1037);">BIATHTR-055</span>
<span class="t s" style="left:980.50px;top:848.40px;font-size:16.4px;color:#141414;transform:scaleX(1.1037);">KBD</span>
<span class="t s" style="left:1102.30px;top:848.40px;font-size:16.4px;color:#141414;transform:scaleX(1.1037);">47.00</span>
<div class="r" style="left:124px;top:267px;width:482px;height:1px;background:#1a1a1a;"></div>
<div class="r" style="left:609px;top:267px;width:528px;height:1px;background:#1a1a1a;"></div>
<div class="r" style="left:124px;top:293px;width:482px;height:1px;background:#1a1a1a;"></div>
<div class="r" style="left:609px;top:293px;width:528px;height:1px;background:#1a1a1a;"></div>
<div class="r" style="left:124px;top:319px;width:482px;height:1px;background:#1a1a1a;"></div>
<div class="r" style="left:609px;top:319px;width:528px;height:1px;background:#1a1a1a;"></div>
<div class="r" style="left:124px;top:345px;width:482px;height:1px;background:#1a1a1a;"></div>
<div class="r" style="left:609px;top:345px;width:528px;height:1px;background:#1a1a1a;"></div>
<div class="r" style="left:124px;top:371px;width:482px;height:1px;background:#1a1a1a;"></div>
<div class="r" style="left:609px;top:371px;width:528px;height:1px;background:#1a1a1a;"></div>
<div class="r" style="left:124px;top:397px;width:482px;height:1px;background:#1a1a1a;"></div>
<div class="r" style="left:609px;top:397px;width:528px;height:1px;background:#1a1a1a;"></div>
<div class="r" style="left:124px;top:423px;width:482px;height:1px;background:#1a1a1a;"></div>
<div class="r" style="left:609px;top:423px;width:528px;height:1px;background:#1a1a1a;"></div>
<div class="r" style="left:124px;top:449px;width:482px;height:1px;background:#1a1a1a;"></div>
<div class="r" style="left:609px;top:449px;width:528px;height:1px;background:#1a1a1a;"></div>
<div class="r" style="left:124px;top:475px;width:482px;height:1px;background:#1a1a1a;"></div>
<div class="r" style="left:609px;top:475px;width:528px;height:1px;background:#1a1a1a;"></div>
<div class="r" style="left:124px;top:501px;width:482px;height:1px;background:#1a1a1a;"></div>
<div class="r" style="left:609px;top:501px;width:528px;height:1px;background:#1a1a1a;"></div>
<div class="r" style="left:124px;top:527px;width:482px;height:1px;background:#1a1a1a;"></div>
<div class="r" style="left:609px;top:527px;width:528px;height:1px;background:#1a1a1a;"></div>
<div class="r" style="left:124px;top:553px;width:482px;height:1px;background:#1a1a1a;"></div>
<div class="r" style="left:609px;top:553px;width:528px;height:1px;background:#1a1a1a;"></div>
<div class="r" style="left:124px;top:579px;width:482px;height:1px;background:#1a1a1a;"></div>
<div class="r" style="left:609px;top:579px;width:528px;height:1px;background:#1a1a1a;"></div>
<div class="r" style="left:124px;top:605px;width:482px;height:1px;background:#1a1a1a;"></div>
<div class="r" style="left:609px;top:605px;width:528px;height:1px;background:#1a1a1a;"></div>
<div class="r" style="left:124px;top:635px;width:482px;height:1px;background:#1a1a1a;"></div>
<div class="r" style="left:609px;top:635px;width:528px;height:1px;background:#1a1a1a;"></div>
<div class="r" style="left:124px;top:661px;width:482px;height:1px;background:#1a1a1a;"></div>
<div class="r" style="left:609px;top:661px;width:528px;height:1px;background:#1a1a1a;"></div>
<div class="r" style="left:124px;top:687px;width:482px;height:1px;background:#1a1a1a;"></div>
<div class="r" style="left:609px;top:687px;width:528px;height:1px;background:#1a1a1a;"></div>
<div class="r" style="left:124px;top:713px;width:482px;height:1px;background:#1a1a1a;"></div>
<div class="r" style="left:609px;top:713px;width:528px;height:1px;background:#1a1a1a;"></div>
<div class="r" style="left:124px;top:739px;width:482px;height:1px;background:#1a1a1a;"></div>
<div class="r" style="left:609px;top:739px;width:528px;height:1px;background:#1a1a1a;"></div>
<div class="r" style="left:124px;top:765px;width:482px;height:1px;background:#1a1a1a;"></div>
<div class="r" style="left:609px;top:765px;width:528px;height:1px;background:#1a1a1a;"></div>
<div class="r" style="left:124px;top:791px;width:482px;height:1px;background:#1a1a1a;"></div>
<div class="r" style="left:609px;top:791px;width:528px;height:1px;background:#1a1a1a;"></div>
<div class="r" style="left:124px;top:817px;width:482px;height:1px;background:#1a1a1a;"></div>
<div class="r" style="left:609px;top:817px;width:528px;height:1px;background:#1a1a1a;"></div>
<div class="r" style="left:124px;top:843px;width:482px;height:1px;background:#1a1a1a;"></div>
<div class="r" style="left:609px;top:843px;width:528px;height:1px;background:#1a1a1a;"></div>
<div class="r" style="left:124px;top:869px;width:482px;height:1px;background:#1a1a1a;"></div>
<div class="r" style="left:609px;top:869px;width:528px;height:1px;background:#1a1a1a;"></div>
<div class="r" style="left:124px;top:895px;width:482px;height:1px;background:#1a1a1a;"></div>
<div class="r" style="left:609px;top:895px;width:528px;height:1px;background:#1a1a1a;"></div>
<div class="r" style="left:124px;top:241px;width:1px;height:635px;background:#1a1a1a;"></div>
<div class="r" style="left:276px;top:241px;width:1px;height:635px;background:#1a1a1a;"></div>
<div class="r" style="left:379px;top:241px;width:1px;height:635px;background:#1a1a1a;"></div>
<div class="r" style="left:495px;top:241px;width:1px;height:635px;background:#1a1a1a;"></div>
<div class="r" style="left:605px;top:241px;width:1px;height:635px;background:#1a1a1a;"></div>
<div class="r" style="left:800px;top:241px;width:1px;height:635px;background:#1a1a1a;"></div>
<div class="r" style="left:888px;top:241px;width:1px;height:635px;background:#1a1a1a;"></div>
<div class="r" style="left:976px;top:241px;width:1px;height:635px;background:#1a1a1a;"></div>
<div class="r" style="left:1064px;top:241px;width:1px;height:635px;background:#1a1a1a;"></div>
<div class="r" style="left:609px;top:242px;width:1px;height:634px;background:#8e8e8e;"></div>
<div class="r" style="left:605px;top:216px;width:1px;height:26px;background:#7d7d7d;"></div>
<div class="r" style="left:606.3px;top:216px;width:3.3px;height:660px;background:#d2d2d2;"></div>
<div class="r" style="left:0px;top:606.6px;width:1137px;height:3.1px;background:#d2d2d2;"></div>
<div class="r" style="left:609px;top:604px;width:192px;height:1.9px;background:#217346;"></div>
<div class="r" style="left:604.2px;top:610px;width:2px;height:26px;background:#217346;"></div>
<div class="r" style="left:609px;top:635px;width:188px;height:2px;background:#217346;"></div>
<div class="r" style="left:800px;top:610px;width:2px;height:22.5px;background:#217346;"></div>
<div class="r" style="left:798px;top:633px;width:5px;height:5.2px;background:#217346;outline:1px solid #fff;"></div>
</div></body></html>
